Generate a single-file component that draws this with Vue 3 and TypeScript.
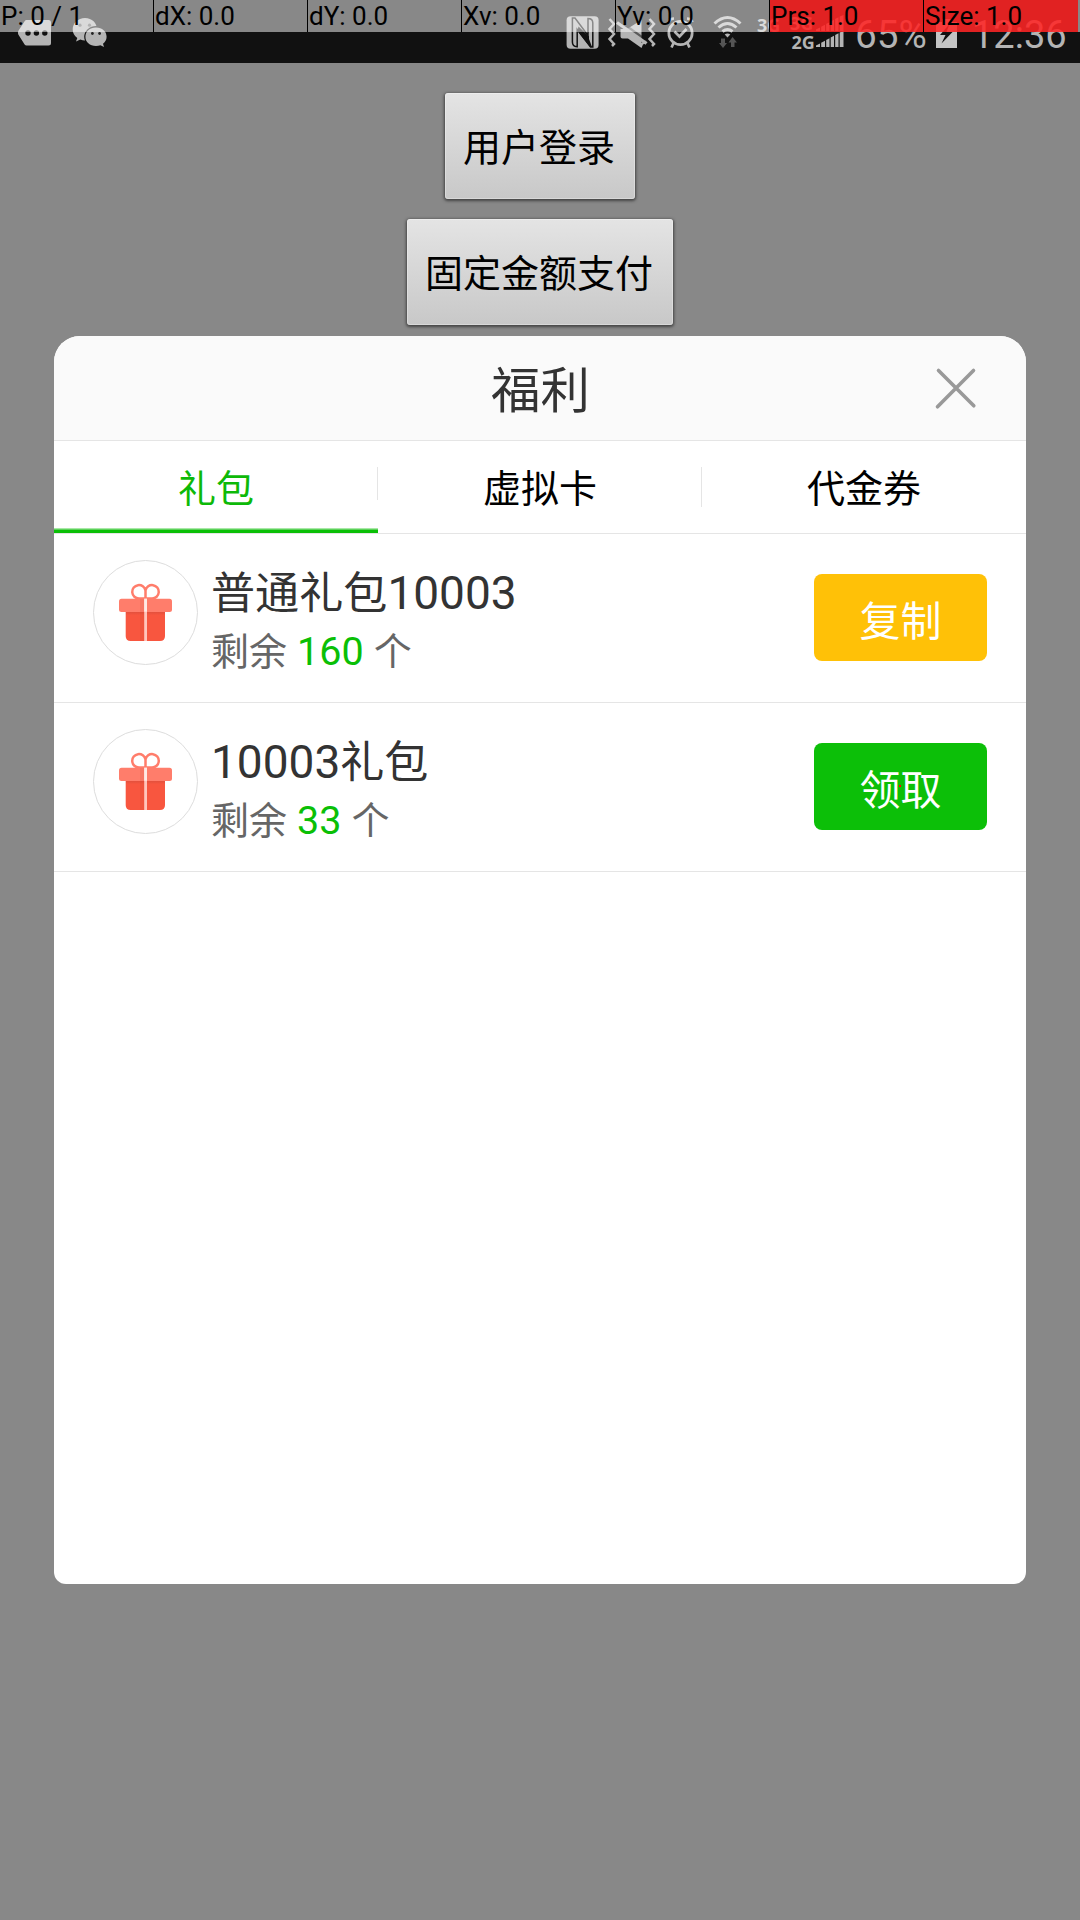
<script setup lang="ts">
import { ref } from 'vue'

interface Gift {
  name: string
  left: number
  action: string
  kind: 'copy' | 'claim'
}

interface Segment {
  text: string
  latin: boolean
}

const metrics: { label: string; hot: boolean }[] = [
  { label: 'P: 0 / 1', hot: false },
  { label: 'dX: 0.0', hot: false },
  { label: 'dY: 0.0', hot: false },
  { label: 'Xv: 0.0', hot: false },
  { label: 'Yv: 0.0', hot: false },
  { label: 'Prs: 1.0', hot: true },
  { label: 'Size: 1.0', hot: true },
]

const tabs: string[] = ['礼包', '虚拟卡', '代金券']
const active = ref(0)

const gifts: Gift[] = [
  { name: '普通礼包10003', left: 160, action: '复制', kind: 'copy' },
  { name: '10003礼包', left: 33, action: '领取', kind: 'claim' },
]

// Digits are set slightly larger than the Chinese glyphs beside them.
function segments(name: string): Segment[] {
  return (name.match(/[\x20-\x7e]+|[^\x20-\x7e]+/g) ?? []).map((text) => ({
    text,
    latin: /^[\x20-\x7e]/.test(text),
  }))
}
</script>

<template>
  <div class="screen">
    <header class="status">
      <svg class="left-icons" width="96" height="63" viewBox="16 0 96 63">
        <path d="M26.5 20H48.5Q51 20 51 22.5V43Q51 45.5 48.5 45.5H26.5Q25.3 45.5 24.6 44.5L18.3 34.5Q17.5 32.7 18.3 31L24.6 21.2Q25.3 20 26.5 20Z" fill="#b4b4b4" />
        <g fill="#111"><circle cx="28" cy="33" r="2.7" /><circle cx="36.4" cy="33" r="2.7" /><circle cx="44.8" cy="33" r="2.7" /></g>
        <path d="M85 18C78 18 72.7 23 72.7 29.3C72.7 33 74.4 36 77.3 38L76 41.5L80.3 39.5Q82.6 40.4 85 40.4C92 40.4 97 35.5 97 29.3C97 23 92 18 85 18Z" fill="#b4b4b4" />
        <ellipse cx="96" cy="36.7" rx="11.8" ry="10.6" fill="#111" />
        <path d="M96 27.5C89.8 27.5 85.4 31.5 85.4 36.8C85.4 42 89.8 46 96 46Q98.3 46 100.5 45.2L104 47L103 43.8Q106.6 41 106.6 36.8C106.6 31.5 102.2 27.5 96 27.5Z" fill="#b4b4b4" />
        <g fill="#222"><circle cx="80" cy="25.2" r="1.6" opacity=".55" /><circle cx="89.5" cy="25.2" r="1.6" opacity=".55" /><circle cx="92.4" cy="33.5" r="1.4" /><circle cx="99.6" cy="33.5" r="1.4" /></g>
      </svg>
      <svg class="right-icons" width="282" height="63" viewBox="564 0 282 63">
        <rect x="566.6" y="16.3" width="32" height="32.5" rx="4" fill="#b4b4b4" />
        <path d="M572.4 18H575L588 35.5V18.5Q592.8 18.5 592.8 23V47H590.6L577.2 29.5V46.8Q572.4 46.5 572.4 42Z" fill="none" stroke="#111" stroke-width="1.5" />
        <path d="M578.5 26.5L589 36.5V39L592 47H590L577.5 31Z" fill="#111" />
        <g fill="none" stroke="#b4b4b4" stroke-width="2.5">
          <path d="M609.5 19L614 24L609.5 29L614 34L609.5 39L614 44L612 46" />
          <path d="M649.5 19L654 24L649.5 29L654 34L649.5 39L654 44L652 46" />
        </g>
        <path d="M620.5 29H627L641.5 20V43L645 40L647.5 42.5L643 44.5L641.5 48L628 38.5H622.5Q620.5 38.5 620.5 36.5Z" fill="#b4b4b4" />
        <path d="M618.5 20.5L648 42" stroke="#111" stroke-width="3" opacity=".55" />
        <path d="M617 22.5L646.5 43.5" stroke="#b4b4b4" stroke-width="3.2" />
        <g fill="none" stroke="#b4b4b4" stroke-width="2.7">
          <circle cx="680.5" cy="33" r="11.7" />
          <path d="M674.5 31.5L679.5 36.5L686.5 29" />
          <path d="M668.5 22Q670 18.5 674 18.5M687 18.5Q691 18.5 692.5 22M674 42L671.5 47.5M687 42L689.5 47.5" />
        </g>
        <g fill="none" stroke="#b4b4b4" stroke-width="3">
          <path d="M714.5 23.5Q727.5 11.5 740.5 23.5" />
          <path d="M718.5 27.5Q727.5 19.5 736.5 27.5" />
          <path d="M722.5 31.5Q727.5 27.5 732.5 31.5" />
        </g>
        <path d="M724.7 34.5Q727.5 32.5 730.3 34.5L727.5 37.5Z" fill="#b4b4b4" />
        <path d="M721 38.5H725V43H727L723 48L719 43H721ZM731 47V42.5H728.5L732.5 37L737 42.5H734.5V47Z" fill="#555" />
        <g class="net">
          <text x="757" y="31.5">3G</text>
          <text x="790" y="29.5">3G</text>
          <text x="791.5" y="49">2G</text>
        </g>
        <g fill="#b4b4b4">
          <path d="M816 31V29.5L820 27.5V31ZM821.2 31V26.7L825 24.7V31ZM826.2 31V24L829.5 22.2V31ZM830.7 31V21.5L834 19.7V31ZM835.2 31V19L838.5 17.2V31ZM839.7 31V16.5L843.5 15V31Z" />
          <path d="M816 47V45.5L820 43.5V47ZM821.2 47V42.7L825 40.7V47ZM826.2 47V40L829.5 38.2V47ZM830.7 47V37.5L834 35.7V47ZM835.2 47V35L838.5 33.2V47ZM839.7 47V32.5L843.5 31V47Z" />
        </g>
      </svg>
      <span class="percent">65%</span>
      <svg class="battery" width="24" height="63" viewBox="934 0 24 63">
        <path d="M936 22H942V19H951V22H957V48H936Z" fill="#c4c4c4" />
        <path d="M949.5 24L940 35H945.5L941.5 43.5L952.5 32H946.5Z" fill="#111" />
      </svg>
      <span class="clock">12:36</span>
    </header>

    <div class="metrics">
      <div v-for="m in metrics" :key="m.label" class="metric" :class="{ hot: m.hot }">{{ m.label }}</div>
    </div>

    <main class="page">
      <button class="native" type="button">用户登录</button>
      <button class="native" type="button">固定金额支付</button>

      <section class="dialog">
        <div class="title-bar">
          <h1>福利</h1>
          <svg class="close" width="44" height="44" viewBox="934 366 44 44">
            <path d="M938.5 370.5L973.8 405.8M973.5 370.5L937.5 406.8" stroke="#999" stroke-width="3.6" stroke-linecap="round" />
          </svg>
        </div>

        <nav class="tabs">
          <div v-for="(tab, i) in tabs" :key="tab" class="tab" :class="{ active: i === active }" @click="active = i">
            <span>{{ tab }}</span>
          </div>
        </nav>

        <ul class="list">
          <li v-for="gift in gifts" :key="gift.name" class="row">
            <div class="badge">
              <svg width="53" height="62" viewBox="0 0 53 62">
                <defs>
                  <linearGradient id="box" x1="0" y1="0" x2="0" y2="1">
                    <stop offset="0" stop-color="#dc4f3c" />
                    <stop offset=".14" stop-color="#f8563f" />
                    <stop offset="1" stop-color="#f8563f" />
                  </linearGradient>
                </defs>
                <path d="M26.5 16.5H20A6.7 6.7 0 1 1 26.5 8.5A6.7 6.7 0 1 1 33 16.5H26.5V8.5" fill="none" stroke="#ff7d6b" stroke-width="2.5" />
                <path d="M6.7 29H46V54Q46 59 41 59H11.7Q6.7 59 6.7 54Z" fill="url(#box)" />
                <rect x="0" y="16.7" width="53" height="13.3" rx="2.5" fill="#ff7d6b" />
                <rect x="21" y="17" width="4" height="42" fill="#b33626" opacity=".1" />
                <rect x="25.2" y="16.7" width="2.8" height="42.3" fill="#ffc4bb" />
                <rect x="25.2" y="16.7" width="2.8" height="13" fill="#ffeae6" />
              </svg>
            </div>
            <div class="info">
              <p class="name"><span v-for="(s, i) in segments(gift.name)" :key="i" :class="{ latin: s.latin }">{{ s.text }}</span></p>
              <p class="stock"><span>剩余</span><span class="count">{{ gift.left }}</span><span>个</span></p>
            </div>
            <button class="action" :class="gift.kind" type="button">{{ gift.action }}<i v-if="gift.kind === 'claim'" class="touch"></i></button>
          </li>
        </ul>
      </section>
    </main>
  </div>
</template>

<style>
body {
  background: #888;
}
</style>

<style scoped>
.screen {
  position: relative;
  width: 1080px;
  height: 1920px;
  overflow: hidden;
  background: #888;
  font-family: Roboto, 'Noto Sans CJK SC', sans-serif;
}

.status {
  display: flex;
  height: 63px;
  background: #111;
  color: #b4b4b4;
  font-size: 38px;
  line-height: 70px;
  white-space: nowrap;
}
.status svg {
  flex: none;
}
.left-icons {
  margin-left: 16px;
}
.right-icons {
  margin-left: 452px;
}
.net {
  fill: #b4b4b4;
  font: 700 18px 'Noto Sans', sans-serif;
}
.percent {
  width: 79px;
  margin-left: 9px;
  font-size: 38.7px;
}
.clock {
  margin-left: 14px;
}

.metrics {
  position: absolute;
  top: 0;
  left: 0;
  display: flex;
  width: 1080px;
  height: 32px;
  background: rgba(255, 255, 255, 0.5);
}
.metric {
  box-sizing: border-box;
  width: 154px;
  padding-left: 1px;
  border-right: 1px solid #000;
  color: #000;
  font-size: 26px;
  line-height: 33px;
  white-space: nowrap;
}
.metric.hot {
  background: rgba(255, 0, 0, 0.75);
}
.metric:last-child {
  border-right: 0;
}

.page {
  display: flex;
  flex-direction: column;
  align-items: center;
  padding-top: 30px;
}
.native {
  height: 106px;
  margin: 0 0 20px;
  padding: 0 20px 2px 18px;
  border: 0;
  border-radius: 3px;
  background: linear-gradient(#e4e4e4, #c8c8c8);
  box-shadow: inset 0 0 0 1px rgba(255, 255, 255, 0.3), 0 1px 3px 1px rgba(0, 0, 0, 0.5);
  color: #000;
  font: 38px/104px 'Noto Sans CJK SC', sans-serif;
}
.native + .native {
  margin-bottom: 11px;
}

.dialog {
  width: 972px;
  height: 1248px;
  overflow: hidden;
  border-radius: 26px 26px 12px 12px;
  background: #fff;
  z-index: 1;
}
.title-bar {
  display: flex;
  align-items: center;
  justify-content: flex-end;
  height: 104px;
  border-bottom: 1px solid #e5e5e5;
  background: #fafafa;
}
h1 {
  flex: 1;
  margin: 0 -93px 0 0;
  padding-top: 6px;
  color: #333;
  font-size: 49.4px;
  font-weight: 400;
  line-height: 100px;
  text-align: center;
}
.close {
  margin-right: 48px;
}

.tabs {
  display: flex;
  height: 92px;
  border-bottom: 1px solid #e5e5e5;
}
.tab {
  position: relative;
  display: flex;
  flex: 1;
  justify-content: center;
  color: #000;
  font-size: 38px;
  line-height: 96px;
}
.tab + .tab::before {
  content: '';
  position: absolute;
  top: 26px;
  left: -1px;
  width: 1px;
  height: 40px;
  background: #e5e5e5;
}
.tab:nth-child(2)::before {
  height: 33px;
}
.tab.active {
  height: 92px;
  background: linear-gradient(#a8e8a6 0 1px, #5cd25a 1px 2px, #0abf06 2px) bottom / 100% 5px no-repeat;
  color: #0db908;
}

.list {
  margin: 0;
  padding: 0;
  list-style: none;
}
.row {
  display: flex;
  height: 168px;
  border-bottom: 1px solid #e5e5e5;
}
.badge {
  display: flex;
  box-sizing: border-box;
  width: 105px;
  height: 105px;
  margin: 26px 13px 0 39px;
  padding: 21px 0 0 25px;
  border: 1px solid #ddd;
  border-radius: 50%;
}
.info {
  flex: 1;
  padding-top: 29px;
}
p {
  display: flex;
  align-items: baseline;
  margin: 0;
  white-space: nowrap;
}
.name {
  height: 61px;
  color: #333;
  font-size: 44.1px;
  line-height: 60px;
}
.latin {
  font-size: 46px;
}
.stock {
  height: 56px;
  color: #666;
  font-size: 38px;
  line-height: 56px;
}
.count {
  margin: 0 10px;
  color: #0abf06;
  font-size: 39.5px;
}
.action {
  position: relative;
  width: 173px;
  height: 87px;
  margin: 40px 39px 0 0;
  padding: 0;
  border: 0;
  border-radius: 8px;
  color: #fff;
  font: 41px/84px 'Noto Sans CJK SC', sans-serif;
}
.copy {
  background: #ffc107;
}
.claim {
  background: #0cbf08;
}
.touch {
  position: absolute;
  top: 42px;
  left: 85px;
  width: 2px;
  height: 2px;
  background: #f00;
}
</style>
